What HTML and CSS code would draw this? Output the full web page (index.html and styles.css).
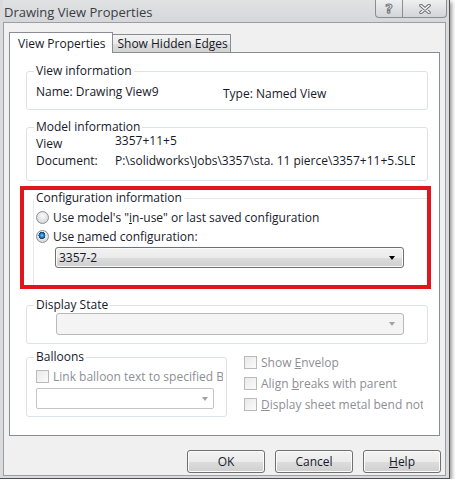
FILE: index.html
```html
<!DOCTYPE html>
<html lang="en">

<head>
    <meta charset="UTF-8">
    <title>Drawing View Properties</title>
    <link rel="stylesheet" href="styles.css">
</head>

<body>
    <div class="window">
        <div class="titlebar">
            <span class="title">Drawing View Properties</span>
            <div class="caption">
                <span class="cap cap-help">?</span>
                <span class="cap cap-close">
                    <svg width="12" height="10" viewBox="0 0 12 10">
                        <path d="M2 1.5 L10 8.5 M10 1.5 L2 8.5" stroke="#6f7278" stroke-width="3.6" stroke-linecap="round" fill="none"/>
                        <path d="M2 1.5 L10 8.5 M10 1.5 L2 8.5" stroke="#f4f4f4" stroke-width="1.6" stroke-linecap="round" fill="none"/>
                    </svg>
                </span>
            </div>
        </div>

        <div class="client">
            <div class="tabs">
                <div class="tab active">View Properties</div>
                <div class="tab">Show Hidden Edges</div>
            </div>

            <div class="page">
                <fieldset class="group view-info">
                    <legend>View information</legend>
                    <div class="name-row">
                        <span class="name">Name: Drawing View9</span>
                        <span class="type">Type: Named View</span>
                    </div>
                </fieldset>

                <fieldset class="group model-info">
                    <legend>Model information</legend>
                    <div class="info-grid">
                        <span class="lbl lbl-view">View</span>
                        <span class="val">3357+11+5</span>
                        <span class="lbl">Document:</span>
                        <span class="val">P:\solidworks\Jobs\3357\sta. 11 pierce\3357+11+5.SLDDRW</span>
                    </div>
                </fieldset>

                <div class="mark">
                    <fieldset class="group config">
                        <legend>Configuration information</legend>
                        <div class="opt">
                            <span class="radio"></span>
                            <span>Use model's "<u>i</u>n-use" or last saved configuration</span>
                        </div>
                        <div class="opt">
                            <span class="radio on"></span>
                            <span>Use <u>n</u>amed configuration:</span>
                        </div>
                        <div class="combo config-combo">
                            <span>3357-2</span>
                            <span class="arrow"></span>
                        </div>
                    </fieldset>
                </div>

                <fieldset class="group display-state">
                    <legend>Display State</legend>
                    <div class="combo disabled state-combo">
                        <span></span>
                        <span class="arrow"></span>
                    </div>
                </fieldset>

                <div class="bottom-row">
                    <fieldset class="group balloons">
                        <legend>Balloons</legend>
                        <div class="opt dim">
                            <span class="check"></span>
                            <span class="clip">Link balloon text to specified Balloon</span>
                        </div>
                        <div class="combo plain balloon-combo">
                            <span></span>
                            <span class="arrow"></span>
                        </div>
                    </fieldset>

                    <div class="options">
                        <div class="opt dim">
                            <span class="check"></span>
                            <span>Show <u>E</u>nvelop</span>
                        </div>
                        <div class="opt dim">
                            <span class="check"></span>
                            <span>Align <u>b</u>reaks with parent</span>
                        </div>
                        <div class="opt dim">
                            <span class="check"></span>
                            <span class="clip"><u>D</u>isplay sheet metal bend notes</span>
                        </div>
                    </div>
                </div>
            </div>

            <div class="buttons">
                <button class="btn">OK</button>
                <button class="btn">Cancel</button>
                <button class="btn"><u>H</u>elp</button>
            </div>
        </div>
    </div>
</body>

</html>
```

FILE: styles.css
```css
* {
    margin: 0;
    padding: 0;
    box-sizing: border-box;
}

body {
    background: #fff;
    font-family: "Open Sans", "Liberation Sans", sans-serif;
    font-size: 12px;
    color: #17192a;
}

/* window frame */
.window {
    width: 450px;
    height: 479px;
    padding: 0 3px 2px 3px;
    background: #d9dadc;
    border-right: 1px solid #4f5054;
    border-bottom: 1px solid #4f5054;
    box-shadow: 2px 2px 4px rgba(0, 0, 0, .4);
    display: flex;
    flex-direction: column;
}

.titlebar {
    height: 22px;
    display: flex;
    justify-content: space-between;
    align-items: flex-start;
    background: linear-gradient(#e1e2e4, #d6d7da);
}

.title {
    padding: 3px 0 0 1px;
    font-size: 13px;
    line-height: 18px;
    color: #3a3d44;
}

.caption {
    display: flex;
    margin-right: -1px;
}

.cap {
    height: 18px;
    display: flex;
    align-items: center;
    justify-content: center;
    border: 1px solid #8b8d91;
    border-top: 0;
    background: linear-gradient(#eeeff1, #d3d5d8);
}

.cap-help {
    width: 27px;
    border-right: 0;
    border-bottom-left-radius: 4px;
    font-family: "DejaVu Sans", sans-serif;
    font-weight: bold;
    font-size: 13px;
    color: #f2f2f2;
    -webkit-text-stroke: 1px #6f7278;
}

.cap-close {
    width: 45px;
    border-bottom-right-radius: 4px;
}

/* client area */
.client {
    height: 454px;
    padding: 9px 4px 2px 5px;
    background: #f0f0f0;
    border: 1px solid #9b9ea3;
    display: flex;
    flex-direction: column;
}

.tabs {
    display: flex;
    align-items: flex-end;
    height: 20px;
}

.tab {
    height: 18px;
    padding: 0 2px 0 4px;
    line-height: 17px;
    border: 1px solid #898c95;
    border-bottom: 0;
    background: linear-gradient(#f3f3f3, #ebebeb 50%, #dddddd 51%, #d3d3d3);
    margin-left: -1px;
}

.tab.active {
    height: 21px;
    margin-left: 0;
    margin-bottom: -1px;
    padding: 0 7px 0 8px;
    line-height: 21px;
    background: #fff;
    position: relative;
}

.page {
    height: 384px;
    margin-right: 1px;
    padding: 11px 11px 0 16px;
    background: #fff;
    border: 1px solid #898c95;
}

/* group boxes */
.group {
    border: 1px solid #dce2e7;
    border-radius: 3px;
    min-width: 0;
}

.group legend {
    margin-left: -2px;
    padding: 0 2px;
    line-height: 14px;
}

.view-info {
    padding: 6px 8px 7px 9px;
}

.name-row {
    display: grid;
    grid-template-columns: 187px auto;
    line-height: 16px;
}

.type {
    padding-top: 2px;
}

.model-info {
    margin-top: 10px;
    padding: 0 8px 11px 9px;
}

.info-grid {
    display: grid;
    grid-template-columns: 79px auto;
    row-gap: 4px;
    margin-top: -1px;
    line-height: 16px;
    white-space: nowrap;
}

.info-grid .val {
    overflow: hidden;
    width: 300px;
}

.lbl-view {
    padding-top: 3px;
    margin-bottom: -3px;
}

/* highlight frame */
.mark {
    margin: 5px -3px 0 -6px;
    padding-top: 1px;
    border: 4px solid #e3151c;
}

.config {
    margin-left: 9px;
    padding: 3px 0 17px 2px;
    border-color: #e6eaee;
    border-right: 0;
    border-bottom: 0;
    border-radius: 3px 0 0 0;
}

.opt {
    height: 19px;
    display: flex;
    align-items: center;
    gap: 4px;
    white-space: nowrap;
}

.opt.dim {
    color: #8d8f94;
}

.clip {
    overflow: hidden;
}

.radio {
    width: 13px;
    height: 13px;
    flex: none;
    border-radius: 50%;
    border: 1px solid #8c8e92;
    background: radial-gradient(circle at 50% 35%, #fafafa, #d6d7d9 80%);
}

.radio.on {
    background:
        radial-gradient(circle at 45% 40%, #8fd0f5 0, #2a8ad0 1.6px, #0d3f78 3.4px, transparent 3.6px),
        radial-gradient(circle at 50% 35%, #fafafa, #d6d7d9 80%);
}

.check {
    width: 13px;
    height: 13px;
    flex: none;
    border: 1px solid #b9babc;
    background: linear-gradient(135deg, #e9e9e9, #fbfbfb);
}

/* drop-down lists */
.combo {
    height: 21px;
    display: flex;
    align-items: center;
    justify-content: space-between;
    padding: 0 8px 0 3px;
    border: 1px solid #707070;
    border-radius: 3px;
    background: linear-gradient(#f2f2f2, #ebebeb 50%, #dddddd 51%, #cfcfcf);
    box-shadow: inset 0 0 0 1px #fbfbfb;
}

.arrow {
    width: 0;
    height: 0;
    border-left: 3.5px solid transparent;
    border-right: 3.5px solid transparent;
    border-top: 4px solid #000;
}

.combo.disabled {
    border-color: #b7babd;
    background: #f4f4f4;
    box-shadow: none;
}

.combo.disabled .arrow,
.combo.plain .arrow {
    border-top-color: #a0a2a6;
}

.combo.plain {
    border-color: #c3c5c9;
    border-radius: 2px;
    background: #fff;
    box-shadow: none;
    padding-right: 5px;
}

.config-combo {
    width: 349px;
    margin: 1px 0 0 19px;
}

.display-state {
    margin-top: 9px;
    padding: 1px 8px 8px 9px;
}

.state-combo {
    width: 348px;
    height: 22px;
    margin-left: 20px;
}

.bottom-row {
    display: flex;
    margin-top: 6px;
}

.balloons {
    width: 201px;
    padding: 3px 3px 7px 9px;
}

.balloon-combo {
    width: 178px;
    margin-top: 2px;
}

.options {
    width: 179px;
    margin-left: 17px;
    padding-top: 2px;
}

.options .opt {
    height: 21px;
}

/* dialog buttons */
.buttons {
    display: flex;
    justify-content: flex-end;
    gap: 10px;
    margin-top: 14px;
}

.btn {
    width: 78px;
    height: 23px;
    font: inherit;
    color: inherit;
    border: 1px solid #707070;
    border-radius: 3px;
    background: linear-gradient(#f2f2f2, #ebebeb 50%, #dddddd 51%, #cfcfcf);
    box-shadow: inset 0 0 0 1px #fbfbfb;
}
```
